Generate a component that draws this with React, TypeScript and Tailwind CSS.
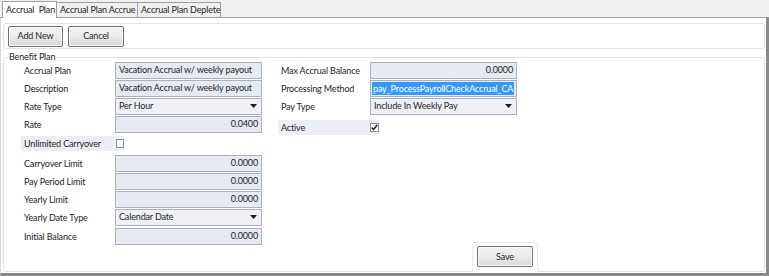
import React from "react";

const font = { fontFamily: 'Lato, "Open Sans", sans-serif', letterSpacing: "-0.15px" };

function Label({ children, w = "w-[91px]" }: { children: React.ReactNode; w?: string }) {
  return <div className={`${w} shrink-0 text-[9px] leading-none text-[#1e1e1e] whitespace-nowrap`}>{children}</div>;
}

function TextBox({ value, right = false, w = "w-[147px]" }: { value: string; right?: boolean; w?: string }) {
  return (
    <div
      className={`${w} h-[17px] border border-[#abb1bb] bg-[#e6eaf2] flex items-center px-[3px] text-[9px] text-[#1e1e1e] whitespace-nowrap overflow-hidden ${
        right ? "justify-end" : "justify-start"
      }`}
    >
      {value}
    </div>
  );
}

function Select({ value, w = "w-[147px]" }: { value: string; w?: string }) {
  return (
    <div className={`${w} h-[17px] border border-[#abb1bb] bg-[#eef0f5] flex items-center justify-between pl-[3px] pr-[4px] text-[9px] text-[#1e1e1e] whitespace-nowrap`}>
      <span>{value}</span>
      <svg width="7" height="4" viewBox="0 0 7 4">
        <path d="M0 0H7L3.5 4Z" fill="#1e1e1e" />
      </svg>
    </div>
  );
}

function Row({ label, children, className = "", lw = "w-[91px]" }: { label: string; children: React.ReactNode; className?: string; lw?: string }) {
  return (
    <div className={`flex items-center h-[18px] ${className}`}>
      <Label w={lw}>{label}</Label>
      {children}
    </div>
  );
}

function CheckBox({ checked }: { checked?: boolean }) {
  return (
    <div className="w-[9px] h-[9px] border border-[#8c8f94] bg-white flex items-center justify-center">
      {checked && (
        <svg width="7" height="7" viewBox="0 0 7 7">
          <path d="M0.8 3.5L2.6 5.6L6.2 0.8" stroke="#1e1e1e" strokeWidth="1.5" fill="none" />
        </svg>
      )}
    </div>
  );
}

function Button({ children, w }: { children: React.ReactNode; w: string }) {
  return (
    <div
      className={`${w} h-[21px] rounded-[2px] border border-[#707070] bg-gradient-to-b from-[#f2f2f2] via-[#ebebeb] to-[#d6d6d6] flex items-center justify-center text-[9px] text-[#1e1e1e] shadow-[inset_0_0_0_1px_#fcfcfc]`}
    >
      {children}
    </div>
  );
}

export default function App() {
  return (
    <div style={font} className="w-[769px] h-[276px] bg-[#f0f0f0] flex flex-col overflow-hidden">
      {/* Tab strip */}
      <div className="h-[18px] flex items-end pl-[2px] shrink-0 border-b border-[#a0a0a0]">
        <div className="h-[17px] w-[55px] bg-white border border-b-0 border-[#a0a0a0] flex items-center pl-[3px] text-[9px] text-[#1e1e1e] -mb-px relative z-10 whitespace-pre">
          Accrual  Plan
        </div>
        <div className="h-[15px] w-[81px] bg-[#f0f0f0] border border-b-0 border-l-0 border-[#a0a0a0] flex items-center pl-[3px] text-[9px] text-[#1e1e1e] whitespace-nowrap">
          Accrual Plan Accrue
        </div>
        <div className="h-[15px] w-[83px] bg-[#f0f0f0] border border-b-0 border-l-0 border-[#a0a0a0] flex items-center pl-[3px] text-[9px] text-[#1e1e1e] whitespace-nowrap">
          Accrual Plan Deplete
        </div>
      </div>

      {/* Content */}
      <div className="flex-1 bg-white border-r-[3px] border-b-[3px] border-[#8a8a8a] flex flex-col pl-[2px] pr-[1px] pb-[1px] border-l border-l-[#d8d8d8]">
        {/* Toolbar */}
        <div className="mt-[5px] h-[26px] shrink-0 rounded-[3px] border border-[#dde3ea] flex items-center gap-[5px] pl-[4px]">
          <Button w="w-[55px]">Add New</Button>
          <Button w="w-[56px]">Cancel</Button>
        </div>

        {/* Benefit plan group */}
        <fieldset className="mt-[2px] flex-1 rounded-[3px] border border-[#dde3ea] pl-[20px] pr-0 pb-0 pt-0 m-0 min-w-0 flex">
          <legend className="-ml-[16px] px-[1px] text-[9px] leading-[12px] h-[12px] text-[#1e1e1e] whitespace-nowrap">Benefit Plan</legend>
          <div className="flex flex-col -mt-[2px] w-[257px]">
            <Row label="Accrual Plan"><TextBox value="Vacation Accrual w/ weekly payout" /></Row>
            <Row label="Description"><TextBox value="Vacation Accrual w/ weekly payout" /></Row>
            <Row label="Rate Type"><Select value="Per Hour" /></Row>
            <Row label="Rate"><TextBox value="0.0400" right /></Row>
            <div className="h-[21px] flex items-center">
              <div className="-ml-[3px] w-[103px] h-[15px] bg-[#eaeef5] flex items-center pl-[3px]">
                <Label w="w-[92px]">Unlimited Carryover</Label>
                <CheckBox />
              </div>
            </div>
            <Row label="Carryover Limit"><TextBox value="0.0000" right /></Row>
            <Row label="Pay Period Limit"><TextBox value="0.0000" right /></Row>
            <Row label="Yearly Limit"><TextBox value="0.0000" right /></Row>
            <Row label="Yearly Date Type"><Select value="Calendar Date" /></Row>
            <Row label="Initial Balance" className="mt-[1px]"><TextBox value="0.0000" right /></Row>
          </div>
          <div className="flex flex-col -mt-[2px] w-[240px]">
            <Row label="Max Accrual Balance" lw="w-[89px]"><TextBox value="0.0000" right /></Row>
            <Row label="Processing Method" lw="w-[89px]">
              <div className="w-[147px] h-[17px] border border-[#abb1bb] bg-[#e6eaf2] flex items-center px-[1px] text-[9px] overflow-hidden">
                <span className="bg-[#3399ff] text-white px-[1px] leading-[13px] whitespace-nowrap">pay_ProcessPayrollCheckAccrual_CA</span>
              </div>
            </Row>
            <Row label="Pay Type" lw="w-[89px]"><Select value="Include In Weekly Pay" /></Row>
            <div className="mt-[5px] -ml-[3px] w-[101px] h-[15px] bg-[#eaeef5] flex items-center pl-[3px]">
              <Label w="w-[89px]">Active</Label>
              <CheckBox checked />
            </div>
            <div className="mt-auto ml-[191px] w-[66px] h-[30px] border border-[#e6ebf0] border-b-0 rounded-t-[3px] flex items-start justify-center pt-[3px] -mb-px bg-white">
              <Button w="w-[56px]">Save</Button>
            </div>
          </div>
        </fieldset>
      </div>
    </div>
  );
}
